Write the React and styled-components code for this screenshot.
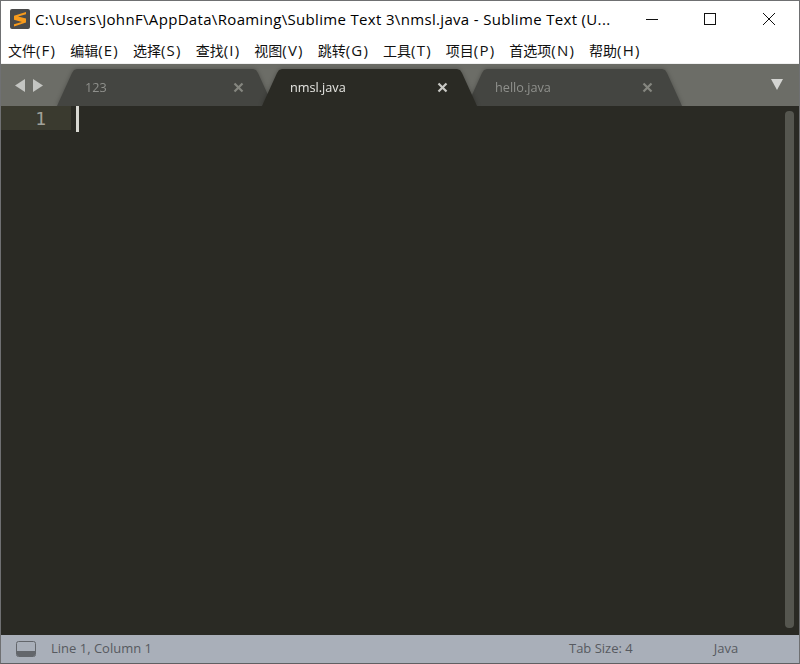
import React from "react";
import styled, { createGlobalStyle } from "styled-components";

const Global = createGlobalStyle`
  html, body { margin: 0; padding: 0; background: #fff; }
  * { box-sizing: border-box; }
`;

const Window = styled.div`
  width: 800px;
  height: 664px;
  display: flex;
  flex-direction: column;
  border: 1px solid #6f7072;
  border-bottom-color: #5f6063;
  overflow: hidden;
  background: #fff;
`;

const TitleBar = styled.div`
  height: 38px;
  display: flex;
  align-items: center;
  padding: 0 1px 2px 9px;
  flex: none;
`;

const Logo = styled.svg`
  width: 20px;
  height: 20px;
  flex: none;
`;

const Title = styled.div`
  margin-left: 5px;
  width: 585px;
  font: 15px "Open Sans", "Noto Sans", sans-serif;
  letter-spacing: 0.33px;
  color: #000;
  white-space: nowrap;
`;

const Controls = styled.div`
  margin-left: auto;
  display: flex;
`;

const Control = styled.div`
  width: 59px;
  height: 36px;
  display: flex;
  align-items: center;
  justify-content: center;
`;

const MenuBar = styled.div`
  height: 24px;
  flex: none;
  display: flex;
  align-items: center;
  padding: 0 0 3px 7px;
  gap: 14px;
  background: #fff;
`;

const MenuItem = styled.span`
  font: 14px "Noto Sans CJK SC", "Open Sans", sans-serif;
  color: #111;
  white-space: nowrap;
`;

const Mnemonic = styled.span`
  font: 15px "Open Sans", "Noto Sans", sans-serif;
  letter-spacing: 1.2px;
`;

const TabBar = styled.div`
  height: 43px;
  flex: none;
  display: flex;
  align-items: flex-end;
  background: #6c6d67;
  border-top: 1px solid #f0f0f0;
  position: relative;
  overflow: hidden;
`;

const Nav = styled.div`
  width: 56px;
  height: 42px;
  flex: none;
  display: flex;
  align-items: center;
  padding-left: 14px;
  gap: 8px;
`;

const Arrow = styled.svg`
  width: 10px;
  height: 13px;
`;

const TabShell = styled.div`
  flex: none;
  margin-left: ${(p) => p.$ml}px;
  position: relative;
  z-index: ${(p) => (p.$active ? 2 : 1)};
  filter: drop-shadow(0 0 2px rgba(0, 0, 0, 0.28));
`;

const Tab = styled.div`
  width: ${(p) => p.$w}px;
  height: 37px;
  padding: 0 29px 0 28px;
  display: flex;
  align-items: center;
  justify-content: space-between;
  background: ${(p) => (p.$active ? "#2a2a24" : "#444541")};
  clip-path: polygon(0 100%, 15px 4px, 17px 1px, 20px 0, calc(100% - 20px) 0, calc(100% - 17px) 1px, calc(100% - 15px) 4px, 100% 100%);
`;

const TabLabel = styled.span`
  font: 12.7px "Open Sans", "Noto Sans", sans-serif;
  margin-bottom: 2px;
  color: ${(p) => (p.$active ? "#e6e6e2" : "#8f908c")};
`;

const CloseIcon = styled.svg`
  width: 11px;
  height: 11px;
  flex: none;
`;

const Dropdown = styled.svg`
  width: 12px;
  height: 11px;
  position: absolute;
  right: 16px;
  top: 15px;
`;

const Editor = styled.div`
  flex: 1;
  display: flex;
  background: #2a2a24;
  min-height: 0;
`;

const Gutter = styled.div`
  width: 70px;
  flex: none;
`;

const ActiveLine = styled.div`
  height: 24px;
  background: #3a3a2f;
  padding-right: 25px;
  text-align: right;
  font: 18px/25px "DejaVu Sans Mono", monospace;
  color: #a0a19a;
`;

const Caret = styled.div`
  width: 3px;
  height: 26px;
  margin-left: 5px;
  background: #d8d8d2;
  flex: none;
`;

const Scrollbar = styled.div`
  width: 9px;
  margin: 5px 5px 7px auto;
  border-radius: 4px;
  background: #55564f;
`;

const StatusBar = styled.div`
  height: 28px;
  flex: none;
  background: #a9afb9;
  display: flex;
  align-items: center;
  padding: 0 0 2px 15px;
  font: 13px "Open Sans", "Noto Sans", sans-serif;
  color: #575a60;
`;

const PanelIcon = styled.svg`
  width: 20px;
  height: 16px;
  margin: 2px 15px 0 0;
`;

const StatusRight = styled.span`
  margin-left: ${(p) => p.$ml}px;
`;

const menu = [
  ["文件", "(F)"], ["编辑", "(E)"], ["选择", "(S)"], ["查找", "(I)"], ["视图", "(V)"],
  ["跳转", "(G)"], ["工具", "(T)"], ["项目", "(P)"], ["首选项", "(N)"], ["帮助", "(H)"],
];

const Close = ({ color }) => (
  <CloseIcon viewBox="0 0 11 11">
    <path d="M1.5 1.5L9.5 9.5M9.5 1.5L1.5 9.5" stroke={color} strokeWidth="2.2" fill="none" />
  </CloseIcon>
);

export default function App() {
  return (
    <>
      <Global />
      <Window>
        <TitleBar>
          <Logo viewBox="0 0 20 20">
            <rect width="20" height="20" rx="2" fill="#4a4a4a" />
            <path d="M16 3L4 6.8V10.8L12 13L4 15.2V17.5L16 13.5V9.5L8 7.5L16 5.3Z" fill="#f89b1c" />
          </Logo>
          <Title>C:\Users\JohnF\AppData\Roaming\Sublime Text 3\nmsl.java - Sublime Text (U...</Title>
          <Controls>
            <Control>
              <svg width="14" height="14" viewBox="0 0 14 14"><path d="M2 7.5H14" stroke="#111" fill="none" /></svg>
            </Control>
            <Control>
              <svg width="14" height="14" viewBox="0 0 14 14"><rect x="1.5" y="1.5" width="11" height="11" stroke="#111" fill="none" /></svg>
            </Control>
            <Control>
              <svg width="14" height="14" viewBox="0 0 14 14"><path d="M1 1L13 13M13 1L1 13" stroke="#111" fill="none" /></svg>
            </Control>
          </Controls>
        </TitleBar>
        <MenuBar>
          {menu.map(([label, key]) => (
            <MenuItem key={key}>{label}<Mnemonic>{key}</Mnemonic></MenuItem>
          ))}
        </MenuBar>
        <TabBar>
          <Nav>
            <Arrow viewBox="0 0 10 13"><path d="M10 0V13L0 6.5Z" fill="#c4c5c2" /></Arrow>
            <Arrow viewBox="0 0 10 13"><path d="M0 0V13L10 6.5Z" fill="#c4c5c2" /></Arrow>
          </Nav>
          <TabShell $ml={0}>
            <Tab $w={216}>
              <TabLabel>123</TabLabel>
              <Close color="#85867f" />
            </Tab>
          </TabShell>
          <TabShell $ml={-11} $active>
            <Tab $w={215} $active>
              <TabLabel $active>nmsl.java</TabLabel>
              <Close color="#c9c9c5" />
            </Tab>
          </TabShell>
          <TabShell $ml={-10}>
            <Tab $w={215}>
              <TabLabel>hello.java</TabLabel>
              <Close color="#85867f" />
            </Tab>
          </TabShell>
          <Dropdown viewBox="0 0 12 11"><path d="M0 0H12L6 11Z" fill="#d4d5d2" /></Dropdown>
        </TabBar>
        <Editor>
          <Gutter><ActiveLine>1</ActiveLine></Gutter>
          <Caret />
          <Scrollbar />
        </Editor>
        <StatusBar>
          <PanelIcon viewBox="0 0 20 16">
            <rect x="0.5" y="0.5" width="19" height="15" rx="2" fill="none" stroke="#63666b" />
            <path d="M1 10H19V13.5A1.5 1.5 0 0 1 17.5 15H2.5A1.5 1.5 0 0 1 1 13.5Z" fill="#63666b" />
          </PanelIcon>
          <span>Line 1, Column 1</span>
          <StatusRight $ml={417}>Tab Size: 4</StatusRight>
          <StatusRight $ml={81}>Java</StatusRight>
        </StatusBar>
      </Window>
    </>
  );
}
